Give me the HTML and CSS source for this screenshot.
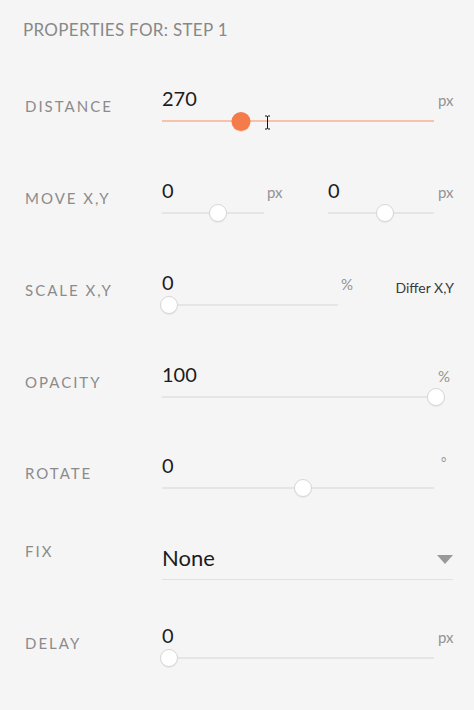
FILE: index.html
```html
<!DOCTYPE html>
<html>
<head>
<meta charset="utf-8">
<link rel="stylesheet" href="styles.css">
</head>
<body>
<div class="panel">
  <h2 class="title">PROPERTIES FOR: STEP 1</h2>
  <div class="rows">
    <div class="row">
      <div class="label">DISTANCE</div>
      <div class="slider active">
        <div class="value">270</div>
        <div class="track"><span class="thumb" style="left:29%"></span></div>
        <svg class="cursor" width="7" height="15" viewBox="0 0 7 15"><path d="M1 1h2l.5 .6L4 1h2M3.5 1.6v11.8M1 14h2l.5-.6.5.6h2" fill="none" stroke="#111" stroke-width="1"/></svg>
      </div>
      <div class="unit">px</div>
    </div>

    <div class="row">
      <div class="label">MOVE X,Y</div>
      <div class="pair">
        <div class="slider w102">
          <div class="value">0</div>
          <div class="track"><span class="thumb" style="left:55%"></span></div>
        </div>
        <div class="unit inline">px</div>
        <div class="slider w106 push">
          <div class="value">0</div>
          <div class="track"><span class="thumb" style="left:54%"></span></div>
        </div>
      </div>
      <div class="unit">px</div>
    </div>

    <div class="row">
      <div class="label">SCALE X,Y</div>
      <div class="pair wide">
        <div class="slider w176">
          <div class="value">0</div>
          <div class="track"><span class="thumb" style="left:4%"></span></div>
        </div>
        <div class="unit inline">%</div>
        <div class="differ">Differ X,Y</div>
      </div>
    </div>

    <div class="row">
      <div class="label">OPACITY</div>
      <div class="slider">
        <div class="value">100</div>
        <div class="track"><span class="thumb" style="left:100.7%"></span></div>
      </div>
      <div class="unit">%</div>
    </div>

    <div class="row rotate">
      <div class="label">ROTATE</div>
      <div class="slider">
        <div class="value">0</div>
        <div class="track"><span class="thumb" style="left:52%"></span></div>
      </div>
      <div class="unit deg">°</div>
    </div>

    <div class="row fix">
      <div class="label">FIX</div>
      <div class="select">
        <span class="select-value">None</span>
        <span class="caret"></span>
      </div>
    </div>

    <div class="row delay">
      <div class="label">DELAY</div>
      <div class="slider">
        <div class="value">0</div>
        <div class="track"><span class="thumb" style="left:2.6%"></span></div>
      </div>
      <div class="unit">px</div>
    </div>
  </div>
</div>
</body>
</html>
```

FILE: styles.css
```css
html, body {
  margin: 0;
  padding: 0;
  background: #f6f5f5;
}

body {
  width: 474px;
  height: 710px;
  overflow: hidden;
  font-family: Lato, "Liberation Sans", sans-serif;
}

.panel {
  padding: 20px 17px 0 25px;
}

.title {
  margin: 0 0 0 -2px;
  font-size: 17px;
  line-height: 20px;
  font-weight: 400;
  letter-spacing: 0.3px;
  color: #888;
}

.rows {
  margin-top: 46px;
  display: flex;
  flex-direction: column;
}

.row {
  display: grid;
  grid-template-columns: 133px 272px 1fr;
  column-gap: 4px;
  margin-top: 48px;
}

.row:first-child {
  margin-top: 0;
}

.row.rotate {
  margin-top: 47px;
}

.label {
  grid-column: 1;
  align-self: center;
  margin-bottom: 4px;
  font-size: 15px;
  line-height: 18px;
  font-weight: 400;
  letter-spacing: 2px;
  color: #8b8b8b;
  white-space: nowrap;
}

.slider {
  position: relative;
  display: flex;
  flex-direction: column;
}

.value {
  font-size: 20px;
  line-height: 24px;
  color: #1c1c1c;
}

.track {
  position: relative;
  height: 18px;
  margin-top: 2px;
}

.track::before {
  content: "";
  position: absolute;
  left: 0;
  right: 0;
  top: 8px;
  height: 2px;
  background: #e6e4e4;
}

.thumb {
  position: absolute;
  top: 0;
  width: 18px;
  height: 18px;
  box-sizing: border-box;
  border-radius: 50%;
  transform: translateX(-50%);
  background: #fff;
  border: 1px solid #d8d6d6;
  box-shadow: 0 1px 1px rgba(0, 0, 0, 0.06);
}

.active .track::before {
  background: #f7c2aa;
}

.active .thumb {
  width: 19px;
  height: 19px;
  top: -0.5px;
  border: none;
  background: #f47c4b;
  box-shadow: 0 1px 1px rgba(200, 80, 30, 0.15);
}

.cursor {
  position: absolute;
  left: 102px;
  top: 29px;
}

.unit {
  align-self: start;
  padding-top: 5px;
  font-size: 15px;
  line-height: 18px;
  font-weight: 400;
  color: #939393;
}

.unit.inline {
  margin-left: 3px;
}

.unit.deg {
  padding-top: 0;
  padding-left: 3px;
  font-size: 13px;
}

.pair {
  display: flex;
  align-items: flex-start;
}

.pair.wide {
  grid-column: 2 / 4;
}

.w102 { width: 102px; }
.w106 { width: 106px; }
.w176 { width: 176px; }

.push {
  margin-left: auto;
}

.differ {
  margin-left: auto;
  margin-right: 3px;
  padding-top: 9px;
  font-size: 14px;
  line-height: 18px;
  color: #3a3a3a;
}

.row.fix {
  margin-top: 45px;
}

.row.fix .label {
  align-self: start;
  margin-bottom: 0;
}

.select {
  grid-column: 2 / 4;
  display: flex;
  align-items: center;
  justify-content: space-between;
  padding: 3px 0 8px;
  border-bottom: 1px solid #e2e0e0;
  margin-right: 4px;
}

.select-value {
  font-size: 22px;
  line-height: 26px;
  color: #1c1c1c;
}

.caret {
  width: 0;
  height: 0;
  border-left: 8px solid transparent;
  border-right: 8px solid transparent;
  border-top: 9px solid #9a9999;
  margin-top: 2px;
}

.row.delay {
  margin-top: 43px;
}
```
